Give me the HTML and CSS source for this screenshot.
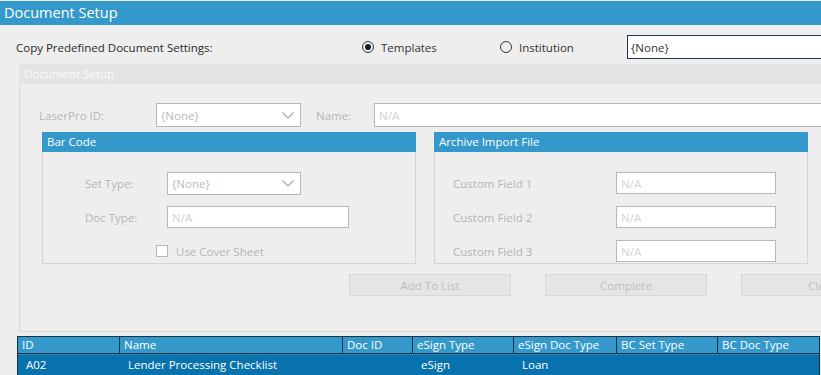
FILE: index.html
```html
<!DOCTYPE html>
<html>
<head>
    <title>Document Setup</title>
    <link rel="stylesheet" href="styles.css">
</head>
<body>

<div class="title-bar">Document Setup</div>

<div class="copy-row">
    <span class="copy-label">Copy Predefined Document Settings:</span>
    <label class="radio-item templates"><span class="radio checked"></span>Templates</label>
    <label class="radio-item institution"><span class="radio"></span>Institution</label>
    <div class="combo active">{None}</div>
</div>

<div class="setup-group">
    <div class="setup-header">Document Setup</div>
    <div class="setup-body">
        <div class="laser-row">
            <span class="field-label laser-label">LaserPro ID:</span>
            <div class="combo disabled laser-combo">
                <span>{None}</span>
                <svg class="chevron" width="12" height="7" viewBox="0 0 12 7"><polyline points="0.5,0.5 6,6 11.5,0.5" fill="none" stroke="#a9a9ae" stroke-width="1.2"/></svg>
            </div>
            <span class="field-label name-label">Name:</span>
            <div class="text-input name-input">N/A</div>
        </div>

        <div class="sub-groups">
            <div class="sub-group">
                <div class="sub-header">Bar Code</div>
                <div class="sub-body barcode-body">
                    <div class="form-row">
                        <span class="field-label bc-label">Set Type:</span>
                        <div class="combo disabled set-combo">
                            <span>{None}</span>
                            <svg class="chevron" width="12" height="7" viewBox="0 0 12 7"><polyline points="0.5,0.5 6,6 11.5,0.5" fill="none" stroke="#a9a9ae" stroke-width="1.2"/></svg>
                        </div>
                    </div>
                    <div class="form-row">
                        <span class="field-label bc-label">Doc Type:</span>
                        <div class="text-input doc-input">N/A</div>
                    </div>
                    <div class="form-row check-row">
                        <span class="checkbox"></span>
                        <span class="field-label">Use Cover Sheet</span>
                    </div>
                </div>
            </div>
            <div class="sub-group">
                <div class="sub-header">Archive Import File</div>
                <div class="sub-body archive-body">
                    <div class="form-row">
                        <span class="field-label custom-label">Custom Field 1</span>
                        <div class="text-input custom-input">N/A</div>
                    </div>
                    <div class="form-row">
                        <span class="field-label custom-label">Custom Field 2</span>
                        <div class="text-input custom-input">N/A</div>
                    </div>
                    <div class="form-row">
                        <span class="field-label custom-label">Custom Field 3</span>
                        <div class="text-input custom-input">N/A</div>
                    </div>
                </div>
            </div>
        </div>

        <div class="button-row">
            <button class="btn" disabled>Add To List</button>
            <button class="btn" disabled>Complete</button>
            <button class="btn" disabled>Clear</button>
        </div>
    </div>
</div>

<div class="doc-table">
    <div class="table-row head">
        <div class="cell c-id">ID</div>
        <div class="cell c-name">Name</div>
        <div class="cell c-docid">Doc ID</div>
        <div class="cell c-esign">eSign Type</div>
        <div class="cell c-esigndoc">eSign Doc Type</div>
        <div class="cell c-bcset">BC Set Type</div>
        <div class="cell c-bcdoc">BC Doc Type</div>
    </div>
    <div class="table-row selected">
        <div class="cell c-id">A02</div>
        <div class="cell c-name">Lender Processing Checklist</div>
        <div class="cell c-docid"></div>
        <div class="cell c-esign">eSign</div>
        <div class="cell c-esigndoc">Loan</div>
        <div class="cell c-bcset"></div>
        <div class="cell c-bcdoc"></div>
    </div>
</div>

</body>
</html>
```

FILE: styles.css
```css
* { margin: 0; padding: 0; box-sizing: border-box; }

body {
    font-family: "Open Sans", "Noto Sans", Arial, sans-serif;
    font-size: 11.5px;
    background: #eeeeee;
    color: #2b2b2b;
    width: 821px;
    height: 375px;
    overflow: hidden;
}

/* Window title */
.title-bar {
    margin-top: 1px;
    height: 24px;
    line-height: 24px;
    padding-left: 4px;
    background: #3498cb;
    color: #fff;
    font-size: 14.5px;
}

/* Copy predefined row */
.copy-row {
    display: flex;
    align-items: center;
    height: 24px;
    margin-top: 10px;
    white-space: nowrap;
}

.copy-label {
    flex: 0 0 362px;
    padding-left: 16px;
}

.radio-item {
    display: flex;
    align-items: center;
    gap: 7px;
    color: #333;
}

.radio-item.templates { flex: 0 0 138px; }
.radio-item.institution { flex: 0 0 127px; }

.radio {
    width: 12px;
    height: 12px;
    border: 1.5px solid #2e3a44;
    border-radius: 50%;
    display: flex;
    align-items: center;
    justify-content: center;
}

.radio.checked::after {
    content: "";
    width: 6px;
    height: 6px;
    border-radius: 50%;
    background: #1b1b1b;
}

.combo {
    display: flex;
    align-items: center;
    justify-content: space-between;
    height: 24px;
    padding: 0 6px 0 4px;
    background: #fff;
}

.combo.active {
    flex: 1;
    border: 1px solid #1d3a48;
    border-right: none;
    color: #333;
    padding-left: 3px;
}

.combo.disabled {
    border: 1px solid #b7b7bf;
    color: #b9b9be;
}

/* Document setup group */
.setup-group {
    margin: 5px 0 0 19px;
}

.setup-header {
    height: 20px;
    line-height: 20px;
    padding-left: 5px;
    background: #e4e4e4;
    color: #fafafa;
}

.setup-body {
    height: 248px;
    padding-top: 19px;
    border-left: 1px solid #d8d8d8;
    border-bottom: 1px solid #d8d8d8;
}

.field-label {
    color: #b5b5b9;
    white-space: nowrap;
}

.laser-row {
    display: flex;
    align-items: center;
    height: 24px;
    padding-left: 19px;
}

.laser-label { flex: 0 0 117px; }
.laser-combo { flex: 0 0 145px; }

.name-label {
    flex: 0 0 58px;
    margin-left: 15px;
}

.text-input {
    display: flex;
    align-items: center;
    height: 22px;
    padding-left: 4px;
    background: #fff;
    border: 1px solid #b7b7bf;
    color: #d2d2d6;
}

.name-input {
    flex: 1;
    height: 24px;
    border-right: none;
}

/* Bar code / archive sub groups */
.sub-groups {
    display: flex;
    gap: 18px;
    margin: 5px 0 0 22px;
}

.sub-group { flex: 0 0 374px; }

.sub-header {
    height: 20px;
    line-height: 20px;
    padding-left: 5px;
    background: #3498cb;
    color: #fff;
}

.sub-body {
    height: 112px;
    border: 1px solid #d5d5d5;
    border-top: none;
    padding-top: 19px;
    display: flex;
    flex-direction: column;
    gap: 10px;
}

.form-row {
    display: flex;
    align-items: center;
    height: 24px;
}

.barcode-body { padding-left: 42px; }
.bc-label { flex: 0 0 82px; }
.set-combo { flex: 0 0 134px; height: 23px; }
.doc-input { flex: 0 0 182px; }

.check-row {
    padding-left: 71px;
    gap: 8px;
}

.checkbox {
    width: 12px;
    height: 12px;
    background: #fff;
    border: 1px solid #b7b7bf;
}

.archive-body { padding-left: 18px; }
.custom-label { flex: 0 0 163px; }
.custom-input { flex: 0 0 160px; }

/* Buttons */
.button-row {
    display: flex;
    gap: 34px;
    margin: 10px 0 0 329px;
    overflow: hidden;
}

.btn {
    flex: 0 0 162px;
    height: 22px;
    font-family: inherit;
    font-size: 11.5px;
    background: #e5e5e5;
    border: 1px solid #d8d8d8;
    color: #bdbdc1;
}

/* Document table */
.doc-table {
    margin: 4px 0 0 17px;
    width: 803px;
    border: 1px solid #173247;
    border-bottom: none;
}

.table-row {
    display: grid;
    grid-template-columns: 102px 223px 70px 101px 103px 101px 101px;
    color: #fff;
    white-space: nowrap;
}

.table-row.head {
    height: 17px;
    background: #3498cb;
    border-bottom: 1px solid #173247;
}

.table-row.head .cell {
    line-height: 16px;
    padding-left: 4px;
    border-right: 1px solid #173247;
    overflow: hidden;
}

.table-row.head .cell:last-child { border-right: none; }

.table-row.selected {
    height: 21px;
    background: #0872ad;
    border-top: 1px dotted #5a8fb0;
}

.table-row.selected .cell {
    line-height: 20px;
    padding-left: 8px;
}
```
